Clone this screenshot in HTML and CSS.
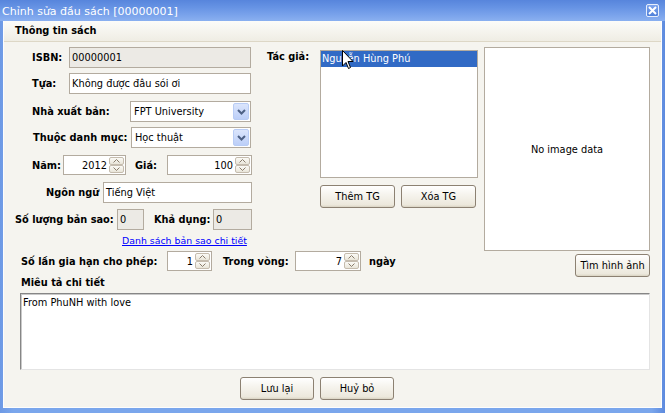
FILE: index.html
```html
<!DOCTYPE html>
<html lang="vi">
<head>
<meta charset="utf-8">
<title>Chỉnh sửa đầu sách</title>
<link rel="stylesheet" href="styles.css">
</head>
<body>
<div class="window">
  <div class="titlebar">
    <span class="title">Chỉnh sửa đầu sách [00000001]</span>
    <span class="close"><svg width="9" height="9" viewBox="0 0 9 9"><path d="M1 1 L8 8 M8 1 L1 8" stroke="#fff" stroke-width="2" fill="none"/></svg></span>
  </div>
  <div class="frame">
    <div class="client">
      <div class="group-header">Thông tin sách</div>
      <div class="content">
        <div class="top">
          <div class="leftmid">
            <div class="cols">
              <div class="form">
                <div class="row r1"><span class="lbl">ISBN:</span><div class="tb ro w182">00000001</div></div>
                <div class="row r2"><span class="lbl">Tựa:</span><div class="tb w182">Không được đâu sói ơi</div></div>
                <div class="row r3"><span class="lbl">Nhà xuất bản:</span><div class="combo w121"><span class="cv">FPT University</span><span class="dd"><svg width="9" height="6" viewBox="0 0 9 6"><path d="M1 1 L4.5 4.5 L8 1" stroke="#4d6185" stroke-width="2" fill="none"/></svg></span></div></div>
                <div class="row r4"><span class="lbl">Thuộc danh mục:</span><div class="combo w120"><span class="cv">Học thuật</span><span class="dd"><svg width="9" height="6" viewBox="0 0 9 6"><path d="M1 1 L4.5 4.5 L8 1" stroke="#4d6185" stroke-width="2" fill="none"/></svg></span></div></div>
                <div class="row r5">
                  <span class="lbl l-nam">Năm:</span>
                  <div class="spin w63"><span class="sv">2012</span><span class="sbtns"><span class="sb"><svg width="7" height="4" viewBox="0 0 7 4"><path d="M0.5 3.5 L3.5 0.5 L6.5 3.5" stroke="#8a7d6c" fill="none"/></svg></span><span class="sb"><svg width="7" height="4" viewBox="0 0 7 4"><path d="M0.5 0.5 L3.5 3.5 L6.5 0.5" stroke="#8a7d6c" fill="none"/></svg></span></span></div>
                  <span class="lbl l-gia">Giá:</span>
                  <div class="spin w85"><span class="sv">100</span><span class="sbtns"><span class="sb"><svg width="7" height="4" viewBox="0 0 7 4"><path d="M0.5 3.5 L3.5 0.5 L6.5 3.5" stroke="#8a7d6c" fill="none"/></svg></span><span class="sb"><svg width="7" height="4" viewBox="0 0 7 4"><path d="M0.5 0.5 L3.5 3.5 L6.5 0.5" stroke="#8a7d6c" fill="none"/></svg></span></span></div>
                </div>
                <div class="row r6"><span class="lbl">Ngôn ngữ</span><div class="tb w149">Tiếng Việt</div></div>
                <div class="row r7">
                  <span class="lbl l-sl">Số lượng bản sao:</span><div class="tb ro w27">0</div>
                  <span class="lbl l-kd">Khả dụng:</span><div class="tb ro w39">0</div>
                </div>
                <div class="row r8"><a class="link" href="#">Danh sách bản sao chi tiết</a></div>
              </div>
              <div class="authors">
                <span class="lbl a-lbl">Tác giả:</span>
                <div class="listbox"><div class="item sel">Nguyễn Hùng Phú</div></div>
                <div class="a-btns"><span class="btn">Thêm TG</span><span class="btn">Xóa TG</span></div>
              </div>
            </div>
            <div class="row renew">
              <span class="lbl l-sl2">Số lần gia hạn cho phép:</span>
              <div class="spin w45"><span class="sv">1</span><span class="sbtns"><span class="sb"><svg width="7" height="4" viewBox="0 0 7 4"><path d="M0.5 3.5 L3.5 0.5 L6.5 3.5" stroke="#8a7d6c" fill="none"/></svg></span><span class="sb"><svg width="7" height="4" viewBox="0 0 7 4"><path d="M0.5 0.5 L3.5 3.5 L6.5 0.5" stroke="#8a7d6c" fill="none"/></svg></span></span></div>
              <span class="lbl l-tv">Trong vòng:</span>
              <div class="spin w66"><span class="sv">7</span><span class="sbtns"><span class="sb"><svg width="7" height="4" viewBox="0 0 7 4"><path d="M0.5 3.5 L3.5 0.5 L6.5 3.5" stroke="#8a7d6c" fill="none"/></svg></span><span class="sb"><svg width="7" height="4" viewBox="0 0 7 4"><path d="M0.5 0.5 L3.5 3.5 L6.5 0.5" stroke="#8a7d6c" fill="none"/></svg></span></span></div>
              <span class="lbl l-ngay">ngày</span>
            </div>
          </div>
          <div class="image-col">
            <div class="imgbox">No image data</div>
            <span class="btn">Tìm hình ảnh</span>
          </div>
        </div>
        <div class="lbl desc-lbl">Miêu tả chi tiết</div>
        <div class="textarea">From PhuNH with love</div>
        <div class="actions"><span class="btn">Lưu lại</span><span class="btn">Huỷ bỏ</span></div>
      </div>
    </div>
  </div>
  <svg class="cursor" width="12" height="20" viewBox="0 0 12 20"><path d="M0.5 0.5 L0.5 16 L4 12.5 L6.5 18.5 L8.5 17.5 L6 11.5 L11 11.5 Z" fill="#fff" stroke="#000" stroke-width="1"/></svg>
</div>
</body>
</html>
```
FILE: styles.css
```css
* { box-sizing: border-box; margin: 0; padding: 0; }
body { margin: 0; font-family: "DejaVu Sans", sans-serif; font-size: 9.8px; color: #000; background: #fff; }

.window { position: relative; width: 665px; height: 413px; display: flex; flex-direction: column; background: #7aa4ea; }
.titlebar { height: 21px; flex: 0 0 21px; display: flex; align-items: center; justify-content: space-between; padding: 1px 6px 0 2px; color: #fff; font-size: 11px; background: linear-gradient(to bottom, #5785dc 0%, #6693e4 35%, #79a2eb 70%, #8ab0f0 100%); }
.close { width: 13px; height: 13px; border: 1px solid #e6eefc; border-radius: 2px; background: linear-gradient(#7fa6ee, #4f7fd9); display: flex; align-items: center; justify-content: center; margin-top: -1px; }

.frame { flex: 1; display: flex; padding: 0 3px 5px 3px; background: linear-gradient(to right, #6d99e5, #7aa6ec 2%, #7aa6ec 98%, #5d8ade); }
.client { flex: 1; display: flex; flex-direction: column; background: #f5f4ef; border-left: 1px solid #fdfdfd; border-right: 1px solid #fdfdfd; border-bottom: 1px solid #fdfdfd; }
.group-header { height: 21px; flex: 0 0 21px; padding: 0 0 0 11px; line-height: 20px; font-weight: bold; background: linear-gradient(to bottom, #fcfcf9, #efede4); border-bottom: 1px solid #ddd7c6; }
.content { flex: 1; padding: 5px 0 0 11px; display: flex; flex-direction: column; }

.top { display: flex; }
.leftmid { width: 463px; display: flex; flex-direction: column; }
.cols { display: flex; }
.form { width: 237px; display: flex; flex-direction: column; }
.row { display: flex; align-items: center; }
.lbl { font-weight: bold; white-space: nowrap; flex: 0 0 auto; }

.r1, .r2 { height: 21px; }
.r1 .lbl, .r2 .lbl { width: 54px; padding-left: 17px; }
.r2 { margin-top: 5px; }
.r3 { height: 21px; margin-top: 7px; }
.r3 .lbl { width: 115px; padding-left: 17px; }
.r4 { height: 21px; margin-top: 5px; }
.r4 .lbl { width: 116px; padding-left: 18px; }
.r5 { height: 20px; margin-top: 7px; }
.l-nam { width: 48px; padding-left: 17px; }
.l-gia { width: 41px; padding-left: 9px; }
.r6 { height: 21px; margin-top: 7px; }
.r6 .lbl { width: 88px; padding-left: 31px; }
.r7 { height: 21px; margin-top: 6px; }
.l-sl { width: 102px; }
.l-kd { width: 69px; padding-left: 10px; }
.r8 { height: 13px; margin-top: 4px; padding-left: 107px; white-space: nowrap; }
.link { color: #0000ff; text-decoration: underline; white-space: nowrap; flex: 0 0 auto; font-size: 9.4px; }

.renew { height: 20px; margin-top: 4px; }
.l-sl2 { width: 152px; padding-left: 6px; }
.l-tv { width: 83px; padding-left: 11px; }
.l-ngay { padding-left: 8px; }

.tb { height: 21px; border: 1px solid #b3ab9f; background: #fff; padding: 0 2px; display: flex; align-items: center; white-space: nowrap; overflow: hidden; }
.tb.ro { background: #eceae5; }
.w182 { width: 182px; }
.w149 { width: 149px; }
.w27 { width: 27px; }
.w39 { width: 39px; }
.w121 { width: 121px; }
.w120 { width: 120px; }
.w63 { width: 63px; }
.w85 { width: 85px; }
.w45 { width: 45px; }
.w66 { width: 66px; }

.combo { height: 21px; border: 1px solid #b3ab9f; background: #fff; display: flex; align-items: center; padding: 1px; }
.cv { flex: 1; padding-left: 2px; white-space: nowrap; overflow: hidden; }
.dd { width: 16px; height: 17px; border: 1px solid #b8ccf5; border-radius: 2px; background: linear-gradient(to bottom, #dbe5fc, #bccff8); display: flex; align-items: center; justify-content: center; }

.spin { height: 20px; border: 1px solid #b3ab9f; background: #fff; display: flex; align-items: stretch; padding: 1px; }
.sv { flex: 1; text-align: right; padding-right: 2px; display: flex; align-items: center; justify-content: flex-end; }
.sbtns { width: 15px; display: flex; flex-direction: column; gap: 0; }
.sb { flex: 1; border: 1px solid #c5bcae; border-radius: 2px; background: linear-gradient(to bottom, #fbfaf6, #e9e5d9); display: flex; align-items: center; justify-content: center; }

.authors { width: 211px; margin-left: 15px; margin-top: 3px; display: grid; grid-template-columns: 53px 158px; align-content: start; }
.a-lbl { padding-top: 1px; line-height: 12px; }
.listbox { height: 128px; border: 1px solid #b3ab9f; background: #fff; padding: 0; }
.item { height: 16px; line-height: 16px; padding-left: 1px; white-space: nowrap; }
.item.sel { background: #316ac5; color: #fff; }
.a-btns { grid-column: 2; margin-top: 7px; display: flex; gap: 6px; }

.btn { width: 75px; height: 23px; display: flex; align-items: center; justify-content: center; border: 1px solid #8c8172; border-radius: 3px; background: linear-gradient(to bottom, #ffffff 0%, #f6f4ee 40%, #ece8dc 90%, #d9d3c2 100%); white-space: nowrap; }

.image-col { width: 166px; margin-left: 6px; display: flex; flex-direction: column; align-items: flex-end; }
.imgbox { width: 166px; height: 204px; border: 1px solid #b3ab9f; background: #fff; display: flex; align-items: center; justify-content: center; }
.image-col .btn { margin-top: 3px; }

.desc-lbl { padding-left: 6px; line-height: 12px; height: 12px; }
.textarea { width: 630px; height: 77px; margin: 4px 0 0 5px; background: #fff; border: 1px solid; border-color: #868686 #e4e4e4 #e4e4e4 #868686; box-shadow: inset 1px 1px 0 #c9c9c9; padding: 3px 2px; }
.actions { display: flex; gap: 6px; margin: 7px 0 0 225px; }
.actions .btn { width: 74px; }

.cursor { position: absolute; left: 342px; top: 50px; }
```
